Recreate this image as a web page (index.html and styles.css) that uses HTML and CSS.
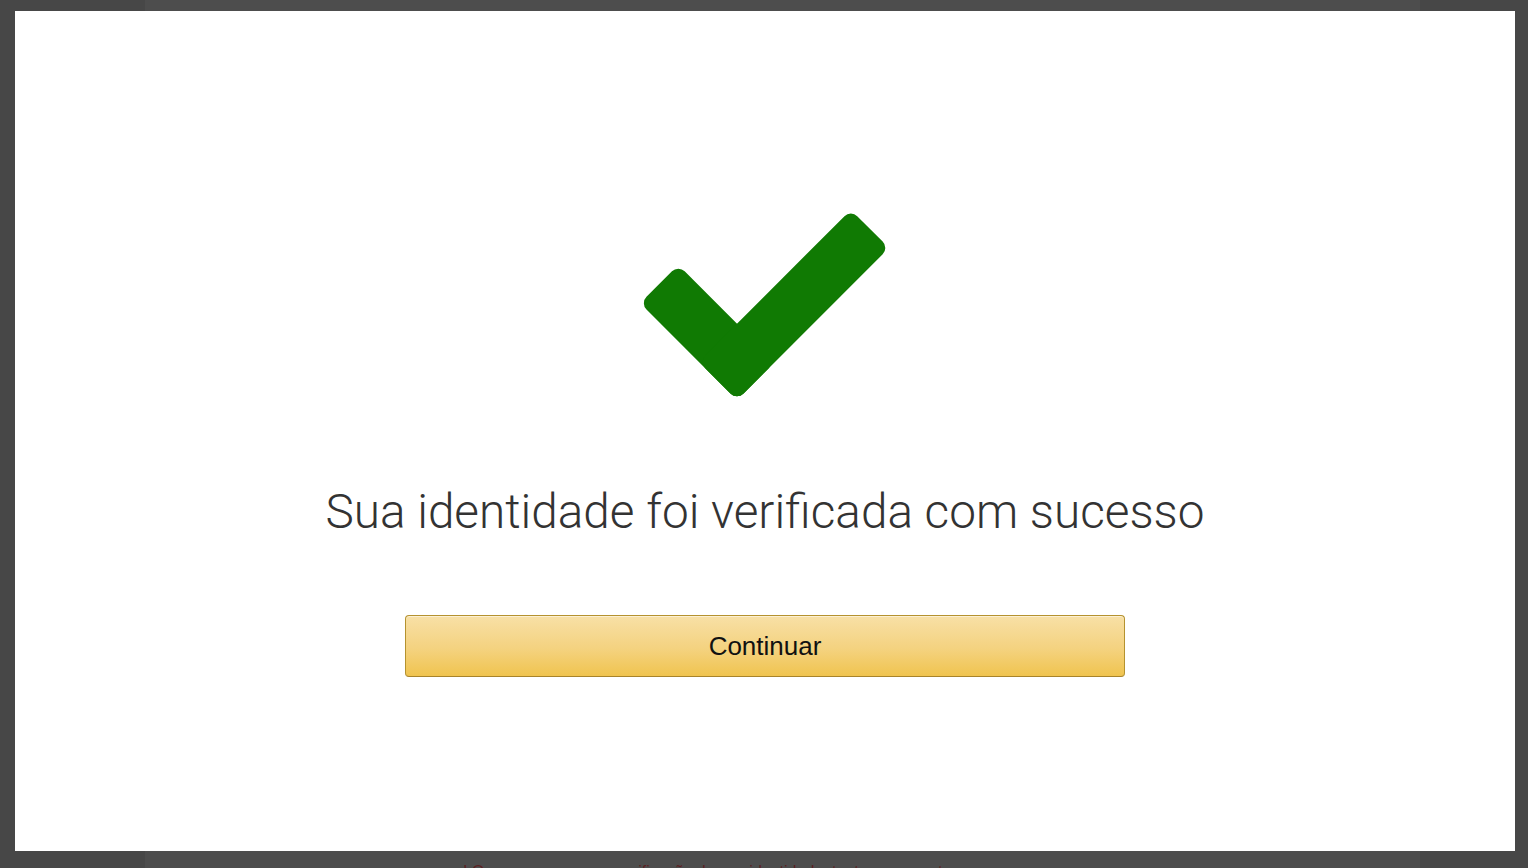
FILE: index.html
```html
<!DOCTYPE html>
<html lang="pt-BR">
<head>
<meta charset="utf-8">
<title>Verificação</title>
<link rel="stylesheet" href="styles.css">
</head>
<body>
<div class="modal">
  <svg class="check" width="250" height="194" viewBox="640 208 250 194" aria-hidden="true">
    <g transform="translate(737 400) rotate(45)">
      <rect x="-137" y="-54" width="137" height="54" rx="9" fill="#107a03"/>
      <rect x="-54" y="-215" width="54" height="215" rx="9" fill="#107a03"/>
    </g>
  </svg>
  <h1 class="title">Sua identidade foi verificada com sucesso</h1>
  <button class="btn">Continuar</button>
</div>
<p class="under">! Ocorreu um erro na verificação de sua identidade, tente novamente.</p>
</body>
</html>
```
FILE: styles.css
```css
html, body {
  margin: 0;
  padding: 0;
}
body {
  height: 868px;
  overflow: hidden;
  background: linear-gradient(to right, #474747 0, #474747 145px, #4d4d4d 145px, #4d4d4d 1420px, #474747 1420px);
  font-family: "Liberation Sans", Arial, sans-serif;
}
.modal {
  margin: 11px 13px 0 15px;
  height: 840px;
  background: #ffffff;
  display: flex;
  flex-direction: column;
  align-items: center;
  box-sizing: border-box;
  padding-top: 197px;
}
.check {
  display: block;
}
.title {
  margin: 82px 0 0;
  font-family: Roboto, "Helvetica Neue", sans-serif;
  font-weight: 300;
  font-size: 47.7px;
  line-height: 56px;
  color: #333333;
  letter-spacing: 0;
}
.btn {
  margin-top: 75px;
  width: 720px;
  height: 62px;
  border: 1px solid #b5922f;
  border-bottom-color: #a8832a;
  border-radius: 4px;
  background: linear-gradient(to bottom, #f8e0a6 0%, #f4d27f 55%, #f0c44f 100%);
  box-shadow: inset 0 1px 0 rgba(255,255,255,0.5);
  font-family: "Liberation Sans", Arial, sans-serif;
  font-size: 26px;
  color: #111111;
  padding: 0;
  cursor: pointer;
}
.under {
  margin: 11px 0 0 463px;
  font-size: 16px;
  line-height: 20px;
  color: #5b1f22;
  white-space: nowrap;
}
```
